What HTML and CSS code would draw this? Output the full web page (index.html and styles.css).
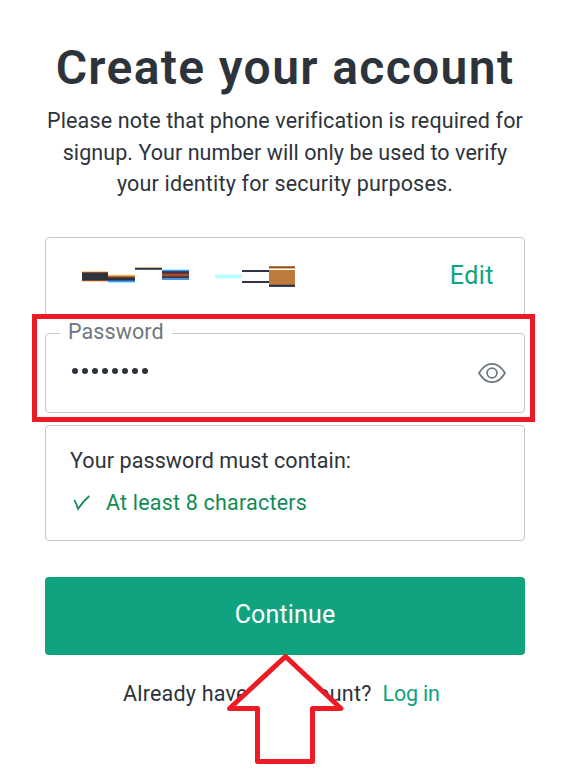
FILE: index.html
```html
<!DOCTYPE html>
<html lang="en">
<head>
  <meta charset="UTF-8" />
  <meta name="viewport" content="width=device-width, initial-scale=1.0"/>
  <title>Create your account</title>
  <link rel="stylesheet" href="styles.css">
</head>
<body>
  <main class="container">
    <h1>Create your account</h1>
    <p class="intro">
      <span class="line line-1">Please note that phone verification is required for</span>
      <span class="line line-2">signup. Your number will only be used to verify</span>
      <span class="line line-3">your identity for security purposes.</span>
    </p>

    <div class="box email">
      <!-- hidden email address -->
      <svg class="redacted" width="213" height="22" viewBox="82 266 213 22" shape-rendering="crispEdges">
        <path fill="#fbd0a0" d="M82 271h26v11H82z"/>
        <path fill="#8f4a35" d="M82 272h26v9H82z"/>
        <path fill="#2d333a" d="M82 273h26v7H82z"/>
        <path fill="#fff0bd" d="M108 274h27v1h-27z"/>
        <path fill="#edb565" d="M108 275h27v1h-27z"/>
        <path fill="#b87333" d="M108 276h27v1h-27z"/>
        <path fill="#70382f" d="M108 277h27v1h-27z"/>
        <path fill="#2d333a" d="M108 278h27v2h-27z"/>
        <path fill="#2f5fb0" d="M108 280h27v1h-27z"/>
        <path fill="#4497ea" d="M108 281h27v1h-27z"/>
        <path fill="#a0edff" d="M108 282h27v1h-27z"/>
        <path fill="#dcb684" d="M135 267h27v1h-27z"/>
        <path fill="#2d333a" d="M135 268h27v1h-27z"/>
        <path fill="#48658d" d="M135 269h27v1h-27z"/>
        <path fill="#b8efff" d="M162 269h27v1h-27z"/>
        <path fill="#4197e0" d="M162 270h27v10h-27z"/>
        <path fill="#2c4677" d="M162 271h27v7h-27z"/>
        <path fill="#46303d" d="M162 272h27v6h-27z"/>
        <path fill="#70372f" d="M162 273h27v4h-27z"/>
        <path fill="#965239" d="M162 274h27v2h-27z"/>
        <path fill="#dcffff" d="M215 274h27v5h-27z"/>
        <path fill="#b8ffff" d="M215 275h27v3h-27z"/>
        <path fill="#2f3446" d="M242 270h27v2h-27zM242 281h27v2h-27z"/>
        <path fill="#bd7b3b" d="M269 266h26v1h-26zM269 270h26v14h-26z"/>
        <path fill="#874936" d="M269 267h26v1h-26z"/>
        <path fill="#e5b77c" d="M269 268h26v1h-26z"/>
        <path fill="#a35c35" d="M269 284h26v1h-26z"/>
        <path fill="#2d2f3d" d="M269 285h26v1h-26z"/>
        <path fill="#304473" d="M269 286h26v1h-26z"/>
      </svg>
      <a class="edit">Edit</a>
    </div>

    <div class="box password">
      <span class="label">Password</span>
      <div class="dots">
        <i></i><i></i><i></i><i></i><i></i><i></i><i></i><i></i>
      </div>
      <svg class="eye" width="28" height="22" viewBox="0 0 28 22" fill="none" stroke="#6e7780" stroke-width="1.8">
        <path d="M1 11C4.500 5 9 1.800 14 1.800S23.500 5 27 11C23.500 17 19 20.200 14 20.200S4.500 17 1 11z"/>
        <circle cx="14" cy="11" r="4.900"/>
      </svg>
      <div class="highlight"></div>
    </div>

    <div class="box rules">
      <div class="rules-title">Your password must contain:</div>
      <div class="rule">
        <svg width="18" height="16" viewBox="0 0 18 16" fill="none" stroke="#128c55" stroke-width="1.800">
          <path d="M1.200 5C2.600 6.800 3.800 10.500 5.100 13.800C8 9.500 11.500 5 16.300 1"/>
        </svg>
        <span>At least 8 characters</span>
      </div>
    </div>

    <button>Continue</button>

    <div class="login">
      <span class="question">Already have an account?</span>
      <a>Log in</a>
      <svg class="arrow" width="120" height="114" viewBox="225 652 120 114">
        <path d="M285.500 656.500L341 708.500H312.500V761.500H257.500V708.500H229.500z" fill="#fff" stroke="#ed1c24" stroke-width="5" stroke-linejoin="round"/>
      </svg>
    </div>
  </main>
</body>
</html>
```
FILE: styles.css
```css
body {
  margin: 0;
  background: #fff;
  color: #2d333a;
  font-family: Roboto, 'Liberation Sans', sans-serif;
  font-size: 21.5px;
}

.container {
  box-sizing: border-box;
  width: 480px;
  height: 769px;
  margin-left: 45px;
  padding-top: 40px;
}

h1 {
  margin: 0;
  font-size: 48px;
  line-height: 56px;
  font-weight: 600;
  letter-spacing: 1.35px;
  text-align: center;
  white-space: nowrap;
}

.intro {
  margin: 9px -10px 0;
  line-height: 31.6px;
  text-align: center;
}

.line {
  display: block;
  white-space: nowrap;
}

.line-1 {
  letter-spacing: 0.13px;
}

.line-2 {
  letter-spacing: 0.06px;
}

.line-3 {
  letter-spacing: 0.17px;
}

.box {
  box-sizing: border-box;
  border: 1px solid #c2c8d0;
  border-radius: 4px;
}

.email {
  display: flex;
  justify-content: space-between;
  height: 80px;
  margin-top: 37px;
  padding: 28px 30px 0 36px;
}

.edit,
.login a {
  color: #10a37f;
}

.edit {
  font-size: 25px;
  line-height: 19px;
  letter-spacing: 0.5px;
}

.password {
  position: relative;
  display: flex;
  justify-content: space-between;
  align-items: center;
  height: 80px;
  margin-top: 16px;
  padding: 0 18px 0 26px;
}

.label {
  position: absolute;
  top: -15px;
  left: 14px;
  padding: 0 8px;
  background: #fff;
  color: #6e7780;
  line-height: 26px;
  letter-spacing: 0.1px;
}

.dots {
  display: flex;
  gap: 4px;
  margin-bottom: 3px;
}

.dots i {
  width: 6px;
  height: 6px;
  border-radius: 50%;
  background: #2d333a;
}

/* red frame around the field */
.highlight {
  position: absolute;
  top: -20px;
  left: -14px;
  width: 493px;
  height: 98px;
  border: 5px solid #ed1c24;
}

.rules {
  height: 116px;
  margin-top: 12px;
  padding: 22px 24px 0;
  letter-spacing: 0.2px;
}

.rules-title {
  line-height: 26px;
  letter-spacing: 0.1px;
}

.rule {
  display: flex;
  align-items: center;
  gap: 15px;
  margin-top: 16px;
  padding-left: 3px;
  color: #128c55;
  line-height: 26px;
}

button {
  display: block;
  width: 480px;
  height: 78px;
  margin-top: 36px;
  padding: 0 0 2px;
  border: none;
  border-radius: 4px;
  background: #10a37f;
  color: #fff;
  font-family: inherit;
  font-size: 25px;
  letter-spacing: 0.15px;
}

.login {
  position: relative;
  display: flex;
  gap: 11px;
  margin-top: 26px;
  padding-left: 78px;
  line-height: 26px;
  letter-spacing: 0.2px;
  white-space: nowrap;
}

.login a {
  letter-spacing: -0.2px;
}

.arrow {
  position: absolute;
  top: -29px;
  left: 180px;
}
```
